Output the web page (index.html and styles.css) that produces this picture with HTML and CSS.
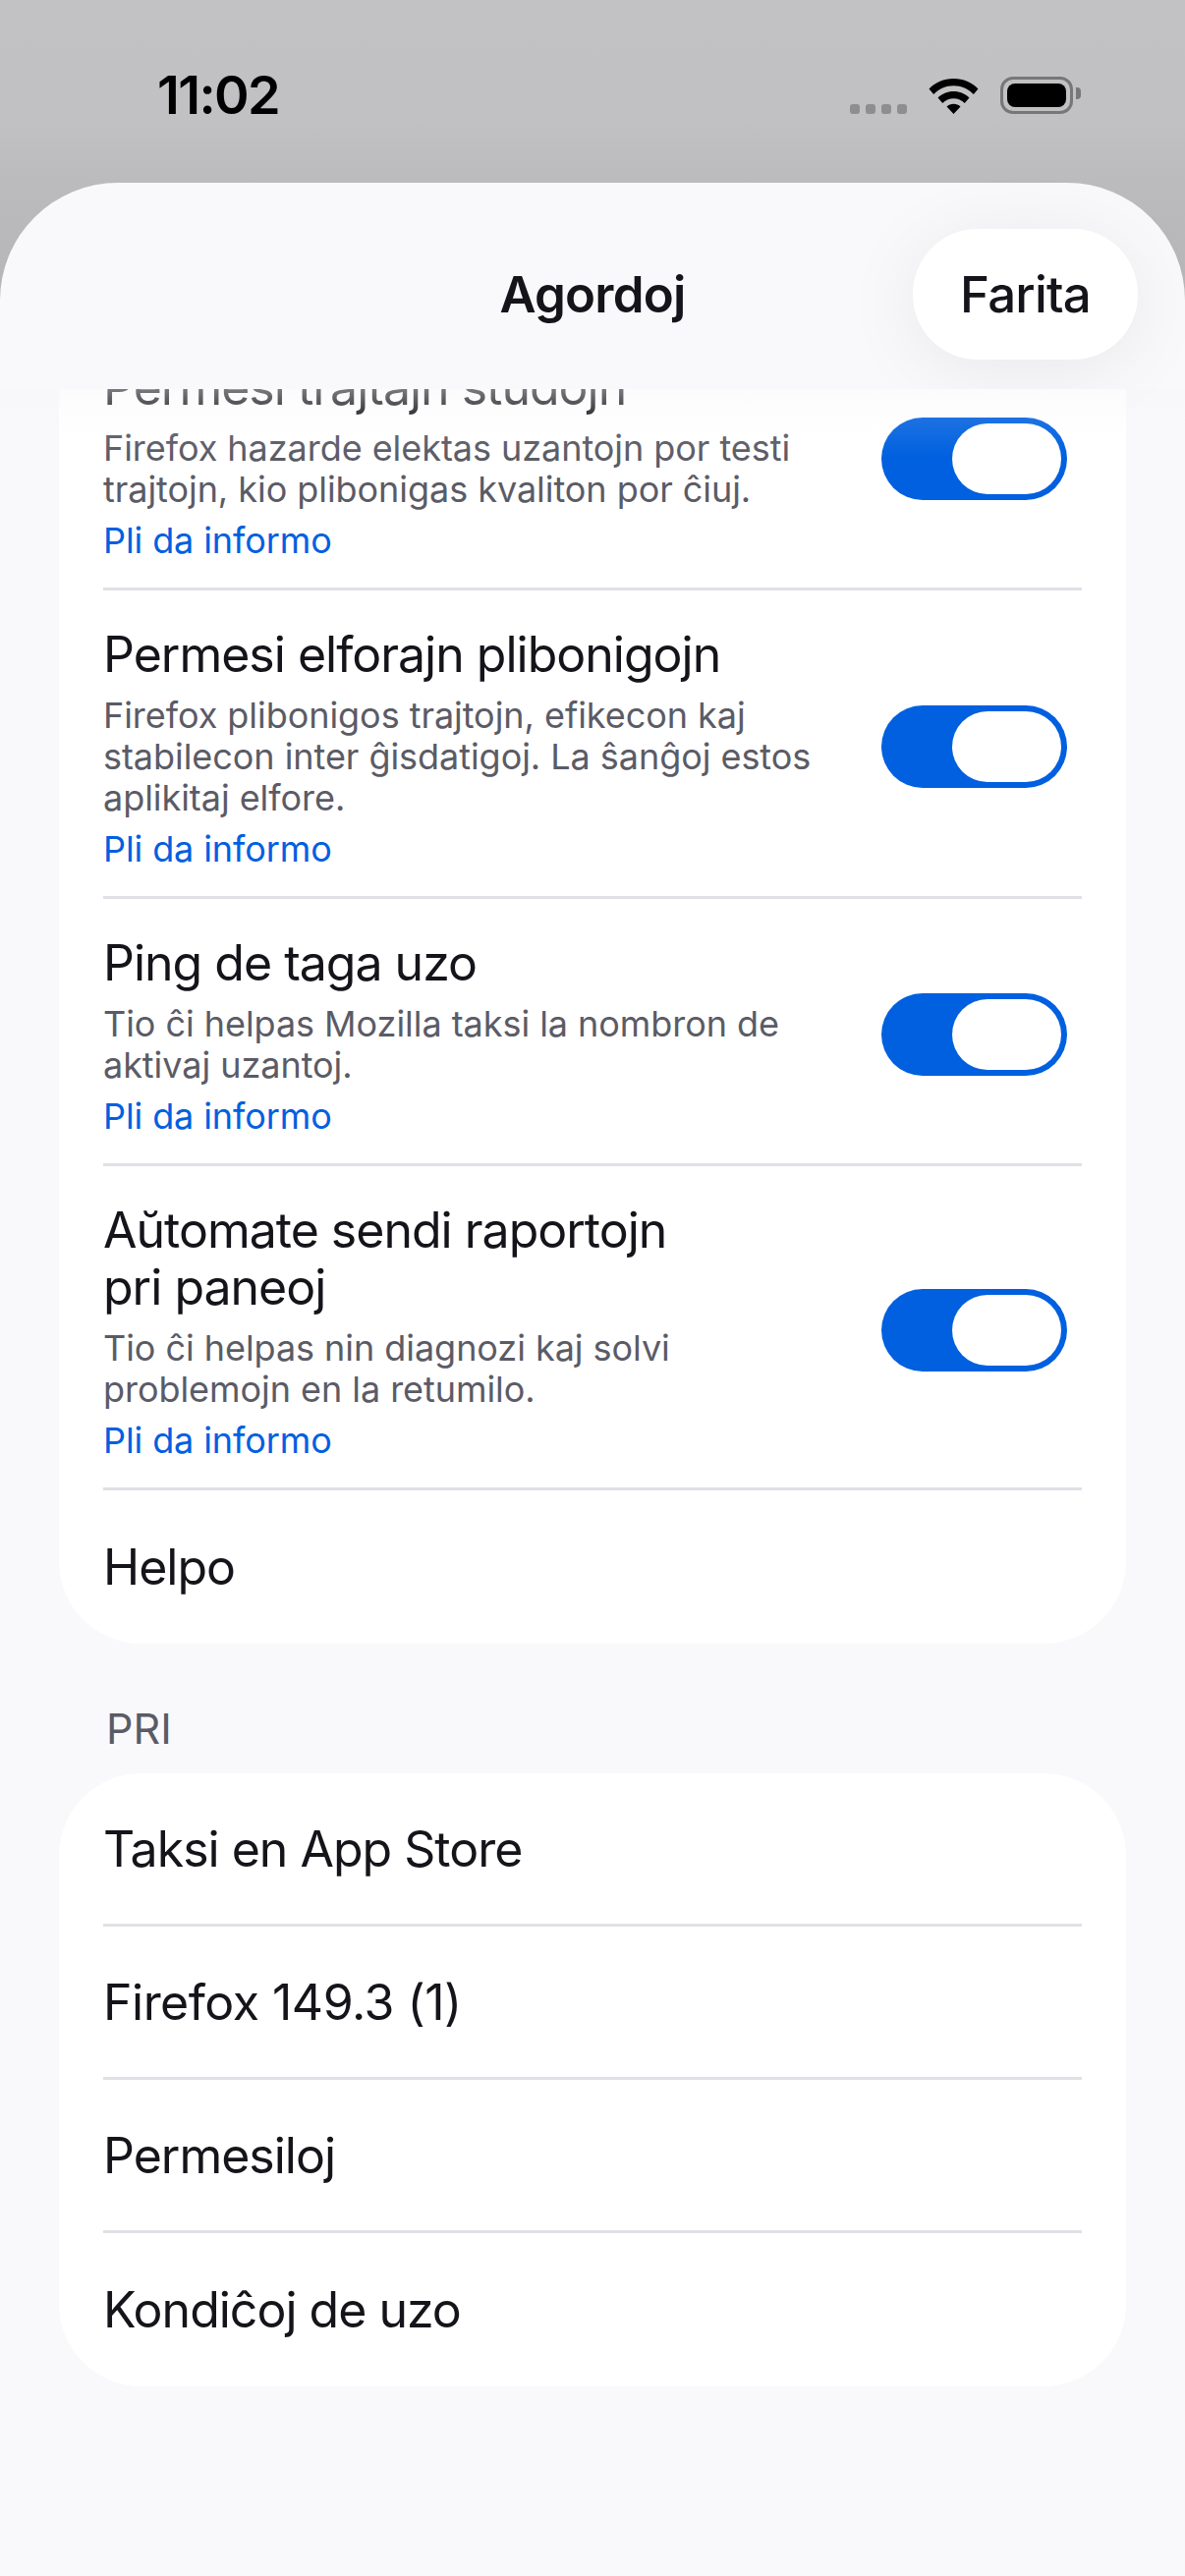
FILE: index.html
```html
<!DOCTYPE html>
<html lang="eo">
  <head>
    <meta charset="UTF-8" />
    <meta name="viewport" content="width=device-width, initial-scale=1.0" />
    <title>Agordoj</title>
    <link rel="stylesheet" href="styles.css">
  </head>
  <body>
    <div class="screen">
      <div class="status-bar">
        <span class="time">11:02</span>
        <div class="status-icons">
          <div class="signal"><i></i><i></i><i></i><i></i></div>
          <svg class="wifi" viewBox="0 0 51 37">
            <path d="M0.5 11.5C7 4.8 15.6 1 25.5 1S44 4.8 50.5 11.5L45.8 17C40.4 11.4 33.4 8.2 25.5 8.2S10.6 11.4 5.2 17Z" />
            <path d="M9.5 20.6C13.7 16.4 19.2 14 25.5 14S37.3 16.4 41.5 20.6L36.7 26C33.7 23 29.9 21.2 25.5 21.2S17.3 23 14.3 26Z" />
            <path d="M18.5 29.6C20.4 27.8 22.8 26.8 25.5 26.8S30.6 27.8 32.5 29.6L25.5 37Z" />
          </svg>
          <div class="battery"><div class="battery-fill"></div></div>
        </div>
      </div>

      <div class="sheet">
        <div class="sheet-header">
          <h1>Agordoj</h1>
          <button class="done-btn">Farita</button>
        </div>

        <div class="scroller">
          <div class="card card-scrolled">
            <div class="row">
              <div class="row-text">
                <div class="row-title">Permesi trajtajn studojn</div>
                <div class="row-desc">Firefox hazarde elektas uzantojn por testi<br>trajtojn, kio plibonigas kvaliton por ĉiuj.</div>
                <a class="row-link">Pli da informo</a>
              </div>
              <div class="toggle"><div class="knob"></div></div>
            </div>
            <div class="row">
              <div class="row-text">
                <div class="row-title">Permesi elforajn plibonigojn</div>
                <div class="row-desc">Firefox plibonigos trajtojn, efikecon kaj<br>stabilecon inter ĝisdatigoj. La ŝanĝoj estos<br>aplikitaj elfore.</div>
                <a class="row-link">Pli da informo</a>
              </div>
              <div class="toggle"><div class="knob"></div></div>
            </div>
            <div class="row">
              <div class="row-text">
                <div class="row-title">Ping de taga uzo</div>
                <div class="row-desc">Tio ĉi helpas Mozilla taksi la nombron de<br>aktivaj uzantoj.</div>
                <a class="row-link">Pli da informo</a>
              </div>
              <div class="toggle"><div class="knob"></div></div>
            </div>
            <div class="row">
              <div class="row-text">
                <div class="row-title">Aŭtomate sendi raportojn<br>pri paneoj</div>
                <div class="row-desc">Tio ĉi helpas nin diagnozi kaj solvi<br>problemojn en la retumilo.</div>
                <a class="row-link">Pli da informo</a>
              </div>
              <div class="toggle"><div class="knob"></div></div>
            </div>
            <div class="row row-plain">Helpo</div>
          </div>

          <div class="section-label">PRI</div>
          <div class="card">
            <div class="row row-plain">Taksi en App Store</div>
            <div class="row row-plain row-version">Firefox 149.3 (1)</div>
            <div class="row row-plain">Permesiloj</div>
            <div class="row row-plain">Kondiĉoj de uzo</div>
          </div>
        </div>
      </div>
    </div>
  </body>
</html>
```

FILE: styles.css
```css
* {
  box-sizing: border-box;
}

body {
  margin: 0;
  padding: 0;
  font-family: Inter, "Noto Sans", sans-serif;
  background-color: #b6b6b8;
  color: #15141a;
}

.screen {
  display: flex;
  flex-direction: column;
  height: 2622px;
  overflow: hidden;
  background: linear-gradient(#c2c2c4 0, #c1c1c3 120px, #bbbbbd 186px, #b6b6b8 300px);
}

/* status bar */
.status-bar {
  display: flex;
  justify-content: space-between;
  align-items: flex-start;
  height: 186px;
  padding: 66px 114px 0 160px;
}

.time {
  font-size: 54px;
  font-weight: 600;
  line-height: 62px;
  letter-spacing: -1.6px;
  color: #000;
}

.status-icons {
  display: flex;
  align-items: flex-start;
  padding-top: 12px;
}

.signal {
  display: flex;
  gap: 6px;
  margin: 28px 22px 0 0;
}

.signal i {
  width: 10px;
  height: 10px;
  border-radius: 3px;
  background-color: #8e8e90;
}

.wifi {
  width: 51px;
  height: 37px;
  margin-top: 1px;
  fill: #000;
}

.battery {
  position: relative;
  width: 74px;
  height: 38px;
  margin-left: 22px;
  padding: 4px;
  border: 3px solid #77777a;
  border-radius: 13px;
}

.battery::after {
  content: "";
  position: absolute;
  top: 8px;
  right: -11px;
  width: 5px;
  height: 12px;
  border-radius: 0 4px 4px 0;
  background-color: #77777a;
}

.battery-fill {
  height: 100%;
  border-radius: 8px;
  background-color: #000;
}

/* sheet */
.sheet {
  display: flex;
  flex-direction: column;
  flex: 1;
  min-height: 0;
  border-radius: 120px 120px 0 0;
  background-color: #f9f9fb;
}

.sheet-header {
  display: grid;
  grid-template-columns: 229px 1fr 229px;
  align-items: center;
  height: 210px;
  padding: 16px 48px 0;
}

.sheet-header h1 {
  grid-column: 2;
  margin: 0;
  text-align: center;
  font-size: 51px;
  font-weight: 600;
  letter-spacing: -0.8px;
}

.done-btn {
  grid-column: 3;
  height: 133px;
  border: none;
  border-radius: 66px;
  background-color: #fff;
  color: #15141a;
  font-family: inherit;
  font-size: 51px;
  font-weight: 500;
  letter-spacing: -0.8px;
  box-shadow: 0 10px 80px rgba(0, 0, 0, 0.07);
}

.scroller {
  position: relative;
  flex: 1;
  min-height: 0;
  overflow: hidden;
  padding: 0 60px;
}

.scroller::before {
  content: "";
  position: absolute;
  top: 0;
  left: 0;
  right: 0;
  height: 70px;
  background: linear-gradient(rgba(246, 246, 248, 0.45), rgba(246, 246, 248, 0.12) 28px, rgba(246, 246, 248, 0));
}

.card {
  border-radius: 84px;
  background-color: #fff;
}

.card-scrolled {
  margin-top: -67px;
  border-radius: 0 0 84px 84px;
}

.row {
  display: flex;
  align-items: center;
  justify-content: space-between;
  margin: 0 45px;
  padding: 36px 15px 27px 0;
  border-bottom: 3px solid #e0e0e6;
}

.row:last-child {
  border-bottom: none;
}

.row-plain {
  height: 156px;
  padding: 0;
  font-size: 50px;
  letter-spacing: -1px;
}

.row-version {
  letter-spacing: -0.5px;
}

.row-title {
  margin-bottom: 12px;
  font-size: 50px;
  line-height: 58px;
  letter-spacing: -1px;
}

.row-desc {
  font-size: 36px;
  line-height: 42px;
  letter-spacing: -0.05px;
  color: #5b5b66;
}

.row-link {
  display: block;
  margin-top: 10px;
  font-size: 36px;
  line-height: 42px;
  letter-spacing: -0.1px;
  color: #0060df;
}

.toggle {
  flex-shrink: 0;
  display: flex;
  justify-content: flex-end;
  width: 189px;
  height: 84px;
  margin-bottom: 3px;
  padding: 6px;
  border-radius: 42px;
  background-color: #0060df;
}

.knob {
  width: 111px;
  height: 72px;
  border-radius: 36px;
  background-color: #fff;
}

.section-label {
  margin: 62px 0 22px 48px;
  font-size: 43px;
  line-height: 48px;
  color: #5b5b66;
}
```
